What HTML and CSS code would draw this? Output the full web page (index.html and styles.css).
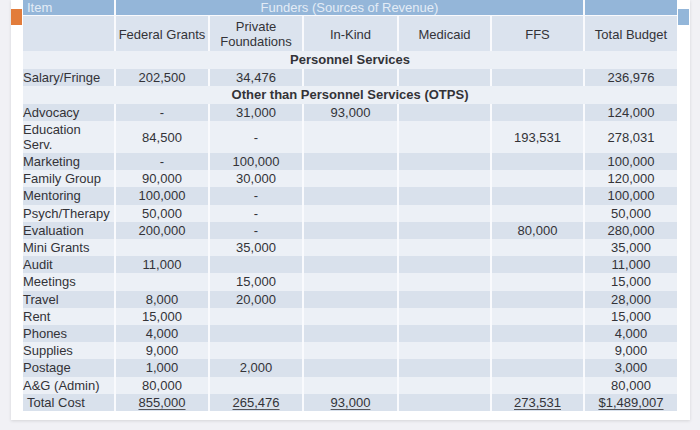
FILE: index.html
```html
<!DOCTYPE html>
<html>
<head>
<meta charset="utf-8">
<link rel="stylesheet" href="styles.css">
</head>
<body>
<div class="page">
  <div class="card">
    <div class="side side-left"><div class="tab tab-orange"></div></div>
    <table class="budget">
      <colgroup>
        <col class="c-item"><col class="c-a"><col class="c-a"><col class="c-b"><col class="c-c"><col class="c-c"><col class="c-c">
      </colgroup>
      <tr class="h1">
        <td class="item-head">Item</td>
        <td colspan="5">Funders (Sources of Revenue)</td>
        <td></td>
      </tr>
      <tr class="h2">
        <td></td>
        <td>Federal Grants</td>
        <td>Private<br>Foundations</td>
        <td>In-Kind</td>
        <td>Medicaid</td>
        <td>FFS</td>
        <td>Total Budget</td>
      </tr>
      <tr class="sec light tall"><td colspan="7">Personnel Services</td></tr>
      <tr class="dark tall"><td>Salary/Fringe</td><td>202,500</td><td>34,476</td><td></td><td></td><td></td><td>236,976</td></tr>
      <tr class="sec light tall"><td colspan="7">Other than Personnel Services (OTPS)</td></tr>
      <tr class="dark tall"><td>Advocacy</td><td>-</td><td>31,000</td><td>93,000</td><td></td><td></td><td>124,000</td></tr>
      <tr class="light double"><td>Education<br>Serv.</td><td>84,500</td><td>-</td><td></td><td></td><td>193,531</td><td>278,031</td></tr>
      <tr class="dark"><td>Marketing</td><td>-</td><td>100,000</td><td></td><td></td><td></td><td>100,000</td></tr>
      <tr class="light"><td>Family Group</td><td>90,000</td><td>30,000</td><td></td><td></td><td></td><td>120,000</td></tr>
      <tr class="dark"><td>Mentoring</td><td>100,000</td><td>-</td><td></td><td></td><td></td><td>100,000</td></tr>
      <tr class="light"><td>Psych/Therapy</td><td>50,000</td><td>-</td><td></td><td></td><td></td><td>50,000</td></tr>
      <tr class="dark"><td>Evaluation</td><td>200,000</td><td>-</td><td></td><td></td><td>80,000</td><td>280,000</td></tr>
      <tr class="light"><td>Mini Grants</td><td></td><td>35,000</td><td></td><td></td><td></td><td>35,000</td></tr>
      <tr class="dark"><td>Audit</td><td>11,000</td><td></td><td></td><td></td><td></td><td>11,000</td></tr>
      <tr class="light"><td>Meetings</td><td></td><td>15,000</td><td></td><td></td><td></td><td>15,000</td></tr>
      <tr class="dark"><td>Travel</td><td>8,000</td><td>20,000</td><td></td><td></td><td></td><td>28,000</td></tr>
      <tr class="light"><td>Rent</td><td>15,000</td><td></td><td></td><td></td><td></td><td>15,000</td></tr>
      <tr class="dark"><td>Phones</td><td>4,000</td><td></td><td></td><td></td><td></td><td>4,000</td></tr>
      <tr class="light"><td>Supplies</td><td>9,000</td><td></td><td></td><td></td><td></td><td>9,000</td></tr>
      <tr class="dark"><td>Postage</td><td>1,000</td><td>2,000</td><td></td><td></td><td></td><td>3,000</td></tr>
      <tr class="light"><td>A&amp;G (Admin)</td><td>80,000</td><td></td><td></td><td></td><td></td><td>80,000</td></tr>
      <tr class="dark total"><td class="total-label">Total Cost</td><td><u>855,000</u></td><td><u>265,476</u></td><td><u>93,000</u></td><td></td><td><u>273,531</u></td><td><u>$1,489,007</u></td></tr>
    </table>
    <div class="side side-right"><div class="tab tab-blue"></div></div>
  </div>
</div>
</body>
</html>
```

FILE: styles.css
```css
html, body {
  margin: 0;
  padding: 0;
  background: #f1f1f5;
  width: 700px;
  height: 430px;
  overflow: hidden;
}

.page {
  padding-left: 11px;
}

.card {
  display: flex;
  width: 679px;
  height: 420px;
  background: #ffffff;
  box-shadow: 0 1px 3px rgba(0, 0, 0, 0.12);
}

.side-left {
  width: 12px;
}

.side-right {
  width: 13px;
  padding-left: 1px;
  box-sizing: border-box;
}

.tab {
  margin-top: 9px;
  width: 11px;
  height: 16px;
}

.tab-orange {
  background: #e27c3b;
}

.tab-blue {
  background: #93b6d9;
}

.budget {
  width: 654px;
  table-layout: fixed;
  border-collapse: collapse;
  align-self: flex-start;
  font-family: "Liberation Sans", Arial, sans-serif;
  font-size: 13px;
  color: #333338;
}

.c-item { width: 92px; }
.c-a { width: 94px; }
.c-b { width: 95px; }
.c-c { width: 93px; }

.budget td {
  padding: 0;
  text-align: center;
  white-space: nowrap;
  border-left: 2px solid #f9fafd;
  height: 17.2px;
  line-height: 17.2px;
}

.budget td:first-child {
  border-left: none;
  text-align: left;
}

.h1 td {
  background: #94b6d9;
  color: #e3ecf6;
  height: 15px;
  line-height: 15px;
  border-bottom: 1px solid #f9fafd;
}

.h1 td.item-head {
  padding-left: 4px;
}

.h2 td {
  background: #dbe3ee;
  height: 34px;
  line-height: 15px;
  padding-top: 1px;
}

.tall td {
  height: 17.5px;
  line-height: 17.5px;
}

.double td {
  height: 32px;
  line-height: 15px;
}

.dark td {
  background: #d9e1ec;
}

.light td {
  background: #ecf0f6;
}

.sec td {
  font-weight: bold;
  text-align: center;
}

.sec td:first-child {
  text-align: center;
}

.total u {
  text-decoration: underline;
  text-decoration-color: #55555a;
  text-underline-offset: 2px;
}

.total td.total-label {
  padding-left: 4px;
}
```
